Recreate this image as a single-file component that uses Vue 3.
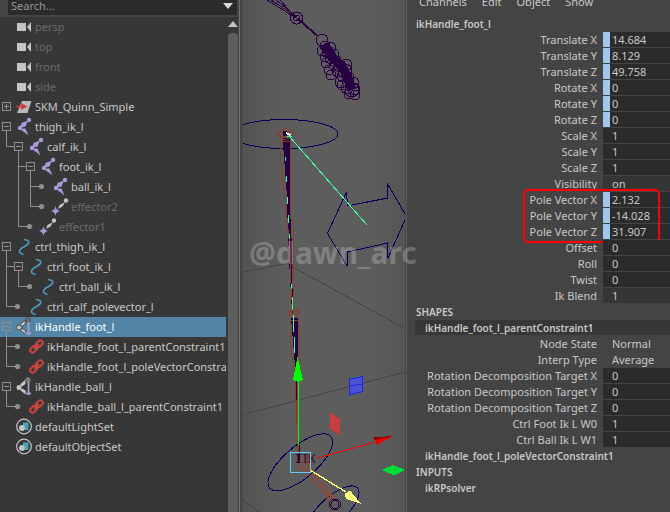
<script setup>
import { ref } from 'vue'

const cameras = ['persp', 'top', 'front', 'side']

// guides: one letter per ancestor level (I = line passes, T = branch, L = last branch)
const nodes = ref([
  ...cameras.map((name) => ({ name, icon: 'camera', guides: '', node: 'none', dim: true })),
  { name: 'SKM_Quinn_Simple', icon: 'transform', guides: '', node: 'closed' },
  { name: 'thigh_ik_l', icon: 'joint', guides: '', node: 'open' },
  { name: 'calf_ik_l', icon: 'joint', guides: 'L', node: 'open' },
  { name: 'foot_ik_l', icon: 'joint', guides: ' T', node: 'open' },
  { name: 'ball_ik_l', icon: 'joint', guides: ' IT', node: 'leaf' },
  { name: 'effector2', icon: 'effector', guides: ' IL', node: 'leaf', dim: true },
  { name: 'effector1', icon: 'effector', guides: ' L', node: 'leaf', dim: true },
  { name: 'ctrl_thigh_ik_l', icon: 'curve', guides: '', node: 'open' },
  { name: 'ctrl_foot_ik_l', icon: 'curve', guides: 'T', node: 'open' },
  { name: 'ctrl_ball_ik_l', icon: 'curve', guides: 'IL', node: 'leaf' },
  { name: 'ctrl_calf_polevector_l', icon: 'curve', guides: 'L', node: 'leaf' },
  { name: 'ikHandle_foot_l', icon: 'handle', guides: '', node: 'open', selected: true },
  { name: 'ikHandle_foot_l_parentConstraint1', icon: 'link', guides: 'T', node: 'leaf' },
  { name: 'ikHandle_foot_l_poleVectorConstraint1', icon: 'link', guides: 'L', node: 'leaf' },
  { name: 'ikHandle_ball_l', icon: 'handle', guides: '', node: 'open' },
  { name: 'ikHandle_ball_l_parentConstraint1', icon: 'link', guides: 'L', node: 'leaf' },
  { name: 'defaultLightSet', icon: 'set', guides: '', node: 'none' },
  { name: 'defaultObjectSet', icon: 'set', guides: '', node: 'none' },
])

const groups = ref([
  {
    id: 'transform',
    rows: [
      { label: 'Translate X', value: '14.684', keyed: true },
      { label: 'Translate Y', value: '8.129', keyed: true },
      { label: 'Translate Z', value: '49.758', keyed: true },
      { label: 'Rotate X', value: '0', keyed: true },
      { label: 'Rotate Y', value: '0', keyed: true },
      { label: 'Rotate Z', value: '0', keyed: true },
      { label: 'Scale X', value: '1' },
      { label: 'Scale Y', value: '1' },
      { label: 'Scale Z', value: '1' },
      { label: 'Visibility', value: 'on', soft: true },
    ],
  },
  {
    id: 'pole',
    marked: true,
    rows: [
      { label: 'Pole Vector X', value: '2.132', keyed: true },
      { label: 'Pole Vector Y', value: '-14.028', keyed: true },
      { label: 'Pole Vector Z', value: '31.907', keyed: true },
    ],
  },
  {
    id: 'ik',
    rows: [
      { label: 'Offset', value: '0' },
      { label: 'Roll', value: '0' },
      { label: 'Twist', value: '0' },
      { label: 'Ik Blend', value: '1', soft: true },
    ],
  },
])

const shapeRows = ref([
  { label: 'Node State', value: 'Normal', choice: true },
  { label: 'Interp Type', value: 'Average', choice: true },
  { label: 'Rotation Decomposition Target X', value: '0' },
  { label: 'Rotation Decomposition Target Y', value: '0' },
  { label: 'Rotation Decomposition Target Z', value: '0' },
  { label: 'Ctrl Foot Ik L W0', value: '1' },
  { label: 'Ctrl Ball Ik L W1', value: '1' },
])

const menus = ['Channels', 'Edit', 'Object', 'Show']
const fieldId = (label) => 'attr-' + label.toLowerCase().replace(/ /g, '-')

// Hand joints, as centre x, centre y, radius
const handJoints = [
  [322, 40, 6], [325, 46, 5], [330, 48, 6], [322, 51, 5], [328, 52, 6], [334, 54, 5], [325, 57, 5],
  [331, 58, 6], [337, 60, 4], [326, 63, 5], [334, 65, 5], [340, 66, 6], [346, 65, 6], [329, 70, 5],
  [338, 71, 6], [345, 71, 7], [331, 75, 5], [343, 76, 6], [349, 77, 5], [341, 82, 6], [348, 82, 6],
  [353, 83, 6], [342, 85, 5], [347, 88, 6], [354, 89, 6], [349, 94, 5], [355, 95, 5], [352, 90, 7],
]
</script>

<template>
  <div class="app">
    <section class="outliner">
      <div class="search">
        <input type="text" placeholder="Search..." aria-label="Search" />
        <button type="button" class="search-menu" aria-label="Search options">
          <svg width="10" height="6" viewBox="0 0 10 6"><path d="M0 0H10L5 6Z" fill="#d8d8d8" /></svg>
        </button>
      </div>
      <div class="tree-area">
        <ul class="tree">
          <li v-for="n in nodes" :key="n.name" class="node" :class="{ dim: n.dim, selected: n.selected }">
            <svg v-for="(g, i) in n.guides" :key="i" class="cell" width="12" height="20" viewBox="0 0 12 20">
              <path v-if="g === 'I'" d="M6.5 0V20" />
              <path v-if="g === 'T'" d="M6.5 0V20M6.5 9.5H14" />
              <path v-if="g === 'L'" d="M6.5 0V9.5H14" />
            </svg>
            <button v-if="n.node === 'open' || n.node === 'closed'" type="button" class="toggle" :aria-label="n.name">
              <svg class="cell" width="12" height="20" viewBox="0 0 12 20">
                <rect x="2.500" y="5.500" width="8" height="8" />
                <path d="M4 9.500H9" />
                <path v-if="n.node === 'closed'" d="M6.500 7V12" />
                <path v-else d="M6.500 14V20" />
              </svg>
            </button>
            <svg v-else class="cell" width="12" height="20" viewBox="0 0 12 20">
              <g v-if="n.node === 'leaf'">
                <path d="M0 9.500H5" />
                <circle class="dot" cx="5.500" cy="9.500" r="2.600" />
              </g>
            </svg>
            <svg class="icon" width="18" height="20" viewBox="0 0 18 20">
              <g v-if="n.icon === 'camera'" fill="#c4c4c4">
                <rect x="2" y="6" width="9" height="8" />
                <path d="M12 10L16 5V15Z" />
              </g>
              <g v-else-if="n.icon === 'transform'">
                <path d="M7 4H16.500L12.500 16H2Z" fill="#b9b9b9" />
                <path d="M1 9.500H8" stroke="#d23c3c" stroke-width="1.500" />
                <path d="M6 6L12.500 9.500L6 13Z" fill="#d23c3c" />
              </g>
              <g v-else-if="n.icon === 'joint'" fill="#a998d8">
                <circle cx="14" cy="3" r="2.200" />
                <circle cx="5" cy="11" r="2.200" />
                <path d="M13 3.500L6.500 6L5 11L10.500 9.500Z" />
                <path d="M5 12L13.500 18.500L10.500 11.500L8 11.500Z" />
              </g>
              <g v-else-if="n.icon === 'effector'">
                <circle cx="15" cy="3.500" r="2.200" fill="#c4c4c4" />
                <path d="M14 5L8.500 8L7 12L11.500 9.500Z" fill="#c4c4c4" />
                <path d="M4.500 9L5.500 12.500L9 14L5.500 15.500L4.500 19L3.500 15.500L0 14L3.500 12.500Z" fill="#a998d8" />
                <circle cx="4.500" cy="14" r="2.200" fill="#a998d8" />
              </g>
              <path
                v-else-if="n.icon === 'curve'"
                d="M9 2.500C15.500 3.500 15 6.500 9.500 9.500C3.500 12.500 2.500 16 8.500 17.500"
                fill="none" stroke="#4d9cc6" stroke-width="1.600"
              />
              <g v-else-if="n.icon === 'handle'">
                <g :stroke="n.selected ? '#4a4a4a' : 'none'" fill="#c8c8c8">
                  <circle cx="4" cy="10.500" r="2.500" />
                  <path d="M5 7.500L10 3L10.500 7L7 9.500Z" />
                  <path d="M5 13L7.500 11.500L11 14L10 17Z" />
                </g>
                <circle cx="13" cy="3" r="2.200" fill="#777" :stroke="n.selected ? '#4a4a4a' : '#8a8a8a'" />
                <path d="M13.500 5V18M10.500 16.500H16" stroke="#a998d8" stroke-width="1.800" />
              </g>
              <g v-else-if="n.icon === 'link'" fill="none" stroke="#cf4444" stroke-width="2">
                <rect x="-3.700" y="-2.500" width="7.500" height="5" rx="2.500" transform="translate(12.300 6.800) rotate(-45)" />
                <rect x="-3.700" y="-2.500" width="7.500" height="5" rx="2.500" transform="translate(6.500 12.300) rotate(-45)" />
                <path d="M7 12L12 7" />
              </g>
              <g v-else>
                <circle cx="9" cy="9.500" r="7.300" fill="none" stroke="#c4c4c4" stroke-width="1.200" />
                <path d="M8 5.500H13.500V13H10V9H8Z" fill="#3fa9b8" />
                <circle cx="7" cy="11" r="3" fill="#c4c4c4" />
              </g>
            </svg>
            <span class="name">{{ n.name }}</span>
          </li>
        </ul>
        <div class="scrollbar">
          <svg width="10" height="6" viewBox="0 0 10 6"><path d="M5 0L10 6H0Z" fill="#c4c4c4" /></svg>
          <div class="thumb"></div>
        </div>
      </div>
    </section>

    <div class="splitter"></div>

    <section class="viewport">
      <svg class="scene" viewBox="243 0 162 512" shape-rendering="crispEdges" fill="none">
        <g stroke="#454545">
          <path d="M242 272.500L286 263.500L407 329.500" />
          <path d="M242 415L407 371.500" />
          <path d="M242 500L259 512" />
        </g>

        <g stroke="#2a0045">
          <path d="M267 0L296 18M271 0L297 17M276 0L296 16M280 0L297 19M296 18L317 36M298 18L318 36" />
          <circle cx="296.500" cy="18" r="6" />
          <circle cx="296.500" cy="18" r="3" />
          <path d="M324 44L331 56L343 68L347 76L352 90" stroke-width="9" />
          <circle v-for="(j, i) in handJoints" :key="i" :cx="j[0]" :cy="j[1]" :r="j[2]" />
        </g>

        <g stroke="#00005c">
          <ellipse cx="284" cy="134" rx="54" ry="14.500" />
          <path d="M327.500 233.500L346.500 192L347.500 206L387.500 198L387 183L406.500 216.500L388 258L387.500 243L347.500 252L347 266Z" />
        </g>

        <path d="M283 138H289L290 190L291.500 260L292.500 313L289.500 260L287 190Z" fill="#260040" stroke="#260040" />
        <path d="M291.500 318L297 318L298 345L297 357L299 440L295 360Z" fill="#260040" stroke="#260040" />
        <g stroke="#8a3f26">
          <circle cx="285" cy="134" r="5.500" />
          <ellipse cx="285" cy="134" rx="9" ry="2.500" />
          <path d="M281 140L280.500 158L289 238L290.500 275L292.500 308" />
          <path d="M290.500 140L290.500 218L293 222V275L293.500 308" />
          <path d="M281 141H291" />
          <circle cx="293.500" cy="313" r="4.500" />
          <ellipse cx="294" cy="313" rx="6" ry="2" />
          <path d="M290 319V342L295 375L298 452" />
          <path d="M298.500 319L299.500 345L297 390L299 452M290 320H299" />
        </g>
        <path d="M283 131H287V136H283Z" fill="#260040" />
        <path d="M286 133L290 135" stroke="#fff" stroke-width="2" />
        <path d="M285 157V161M286.500 176V182M287.500 197V204M288.500 215V223M289.500 234V239M291.500 284V289M292.500 297V310M293.500 315V332M294.500 337V353" stroke="#3dffab" />
        <path d="M289 136L367 225M287 136H292M290 133V138" stroke="#3dffa0" />

        <g stroke="#00005c">
          <ellipse cx="300.300" cy="462.300" rx="40" ry="16" transform="rotate(-40 300.300 462.300)" />
          <ellipse cx="333" cy="510" rx="33" ry="13" transform="rotate(-42 333 510)" />
        </g>
        <g stroke="#94472c">
          <path d="M297 462L322 487L335 501M300 465L332 503M306 463L325 487L338 503M303 462L316 472L330 500M297 460L310 463L312 468L299 468Z" />
          <path d="M295 461L305 456L314 464" />
        </g>
        <g stroke="#260040">
          <circle cx="335" cy="504.500" r="5.500" />
          <circle cx="335" cy="504.500" r="4" />
        </g>
        <text x="296" y="463" class="tag" fill="#260040">I</text>
        <text x="303" y="463" class="tag" fill="#4b2035">IK</text>

        <path d="M298.500 380V445" stroke="#0f0" stroke-width="1.500" />
        <path d="M299 445V460" stroke="#111" />
        <path d="M297.500 357L303 380L298 382L293 380Z" fill="#0f0" />
        <path d="M349.500 379L362.500 376.500V391.500L349.500 395Z" fill="#4a50d8" stroke="#1f25d8" />
        <path d="M350 386L362 384" stroke="#1f25d8" />
        <path d="M330.500 413.500L339.500 419V434L330.500 428.500Z" fill="#c04242" stroke="#e23030" />
        <path d="M317 458L374 442.500" stroke="#f00" />
        <path d="M373 437.500L393 436L377 445Z" fill="#e00" />
        <path d="M373 437.500L393 436L376 440Z" fill="#8a0000" />
        <path d="M382 470L393 465L405.500 470L394 475.500Z" fill="#00dc37" />
        <path d="M310 470L346 492" stroke="#ffff7a" stroke-width="1.300" />
        <path d="M350 490.500L361 504L346 499L344.500 494Z" fill="#ffff80" />
        <rect x="290.500" y="452.500" width="20" height="20" stroke="#5bcdf5" stroke-width="1.500" />
      </svg>
      <span class="watermark">@dawn_arc</span>
    </section>

    <section class="channels">
      <nav class="menus">
        <button v-for="m in menus" :key="m" type="button">{{ m }}</button>
      </nav>
      <h2 class="object">ikHandle_foot_l</h2>
      <div v-for="g in groups" :key="g.id" class="group" :class="{ marked: g.marked }">
        <div v-for="r in g.rows" :key="r.label" class="attr" :class="{ keyed: r.keyed, soft: r.soft }">
          <label :for="fieldId(r.label)">{{ r.label }}</label>
          <input :id="fieldId(r.label)" v-model="r.value" type="text" />
        </div>
      </div>
      <h3 class="section">SHAPES</h3>
      <h4 class="sub active">ikHandle_foot_l_parentConstraint1</h4>
      <div class="group">
        <div v-for="r in shapeRows" :key="r.label" class="attr">
          <label :for="fieldId(r.label)">{{ r.label }}</label>
          <select v-if="r.choice" :id="fieldId(r.label)" v-model="r.value">
            <option>{{ r.value }}</option>
          </select>
          <input v-else :id="fieldId(r.label)" v-model="r.value" type="text" />
        </div>
      </div>
      <h4 class="sub">ikHandle_foot_l_poleVectorConstraint1</h4>
      <h3 class="section">INPUTS</h3>
      <h4 class="sub">ikRPsolver</h4>
    </section>
  </div>
</template>

<style>
body {
  background: #444;
}
</style>

<style scoped>
.app {
  display: grid;
  grid-template-columns: 238px 4px minmax(0, 1fr) 264px;
  min-height: 100vh;
  overflow: hidden;
  background: #444;
  color: #c8c8c8;
  font: 11px/16px "Noto Sans", "Open Sans", sans-serif;
}

button,
input,
select {
  appearance: none;
  margin: 0;
  padding: 0;
  border: 0;
  border-radius: 0;
  background: none;
  color: inherit;
  font: inherit;
}

.outliner {
  display: flex;
  flex-direction: column;
  min-width: 0;
}

.search {
  display: flex;
  align-items: center;
  height: 15px;
  margin: 0 1px 2px 8px;
  padding-right: 4px;
  background: #2b2b2b;
}

.search input {
  flex: 1;
  min-width: 0;
  height: 16px;
  padding-left: 3px;
  margin-bottom: 3px;
}

.search input::placeholder {
  color: #969696;
  opacity: 1;
}

.search-menu {
  display: flex;
  margin-bottom: 4px;
}

.tree-area {
  display: flex;
  flex: 1;
  background: #373737;
}

.tree {
  flex: 1;
  min-width: 0;
  margin: 0;
  padding: 0;
  list-style: none;
}

.node {
  display: flex;
  align-items: center;
  height: 20px;
  overflow: hidden;
}

.node.selected {
  background: #5285a6;
  color: #fff;
}

.node.dim {
  color: #6b6b6b;
}

.toggle {
  display: flex;
  flex: none;
}

.cell {
  flex: none;
  overflow: visible;
  fill: none;
  stroke: #8f8f8f;
}

.dot {
  fill: #8f8f8f;
  stroke: none;
}

.icon {
  flex: none;
  margin: 0 2px 0 3px;
}

.name {
  white-space: nowrap;
}

.scrollbar {
  display: flex;
  flex-direction: column;
  gap: 6px;
  align-items: center;
  width: 10px;
  margin-left: 2px;
  padding-top: 4px;
}

.scrollbar svg {
  flex: none;
}

.thumb {
  flex: 1;
  width: 10px;
  border-radius: 4px 4px 0 0;
  background: #5d5d5d;
}

.splitter {
  border-left: 1px solid #444;
  border-right: 2px solid #454545;
  background: #737373;
}

.viewport {
  position: relative;
  border-left: 1px solid #4b4b4b;
  border-right: 1px solid #4a4a4a;
  background: linear-gradient(90deg, #535353, #5d5d5d 25%, #5d5d5d 80%, #555);
}

.scene {
  display: block;
  width: 100%;
  height: auto;
}

.tag {
  font: bold 12px "Noto Sans", sans-serif;
}

.watermark {
  position: absolute;
  top: 233px;
  left: 6px;
  z-index: 1;
  color: rgba(255, 255, 255, 0.23);
  font-size: 30px;
  font-weight: 700;
  line-height: 40px;
  pointer-events: none;
}

.channels {
  min-width: 0;
  border-left: 1px solid #5a5a5a;
}

.menus {
  display: flex;
  gap: 15px;
  height: 16px;
  padding-left: 12px;
  overflow: hidden;
}

.menus button {
  height: 16px;
  margin-top: -6px;
}

h2,
h3,
h4 {
  margin: 0;
  font-size: 10px;
  font-weight: 600;
  line-height: 16px;
}

.object,
.section {
  padding-left: 9px;
}

.sub {
  height: 15px;
  margin: 0 0 1px 8px;
  padding-left: 10px;
}

.sub.active {
  background: #373737;
}

.group {
  position: relative;
}

.group.marked::after {
  content: "";
  position: absolute;
  top: -3px;
  right: 10px;
  bottom: -3px;
  width: 133px;
  border: 2px solid #f00;
  border-radius: 5px;
  pointer-events: none;
}

.attr {
  display: grid;
  grid-template-columns: minmax(0, 1fr) 67px;
  column-gap: 6px;
  height: 16px;
}

.attr label {
  text-align: right;
  white-space: nowrap;
}

.attr input,
.attr select {
  box-sizing: border-box;
  width: 100%;
  height: 15px;
  padding-left: 9px;
  background: #2b2b2b;
  line-height: 15px;
}

.attr.keyed input {
  border-left: 7px solid #a0c8ee;
  padding-left: 2px;
}

.attr.soft input {
  background: #353535;
}

.attr select {
  background: none;
}
</style>
